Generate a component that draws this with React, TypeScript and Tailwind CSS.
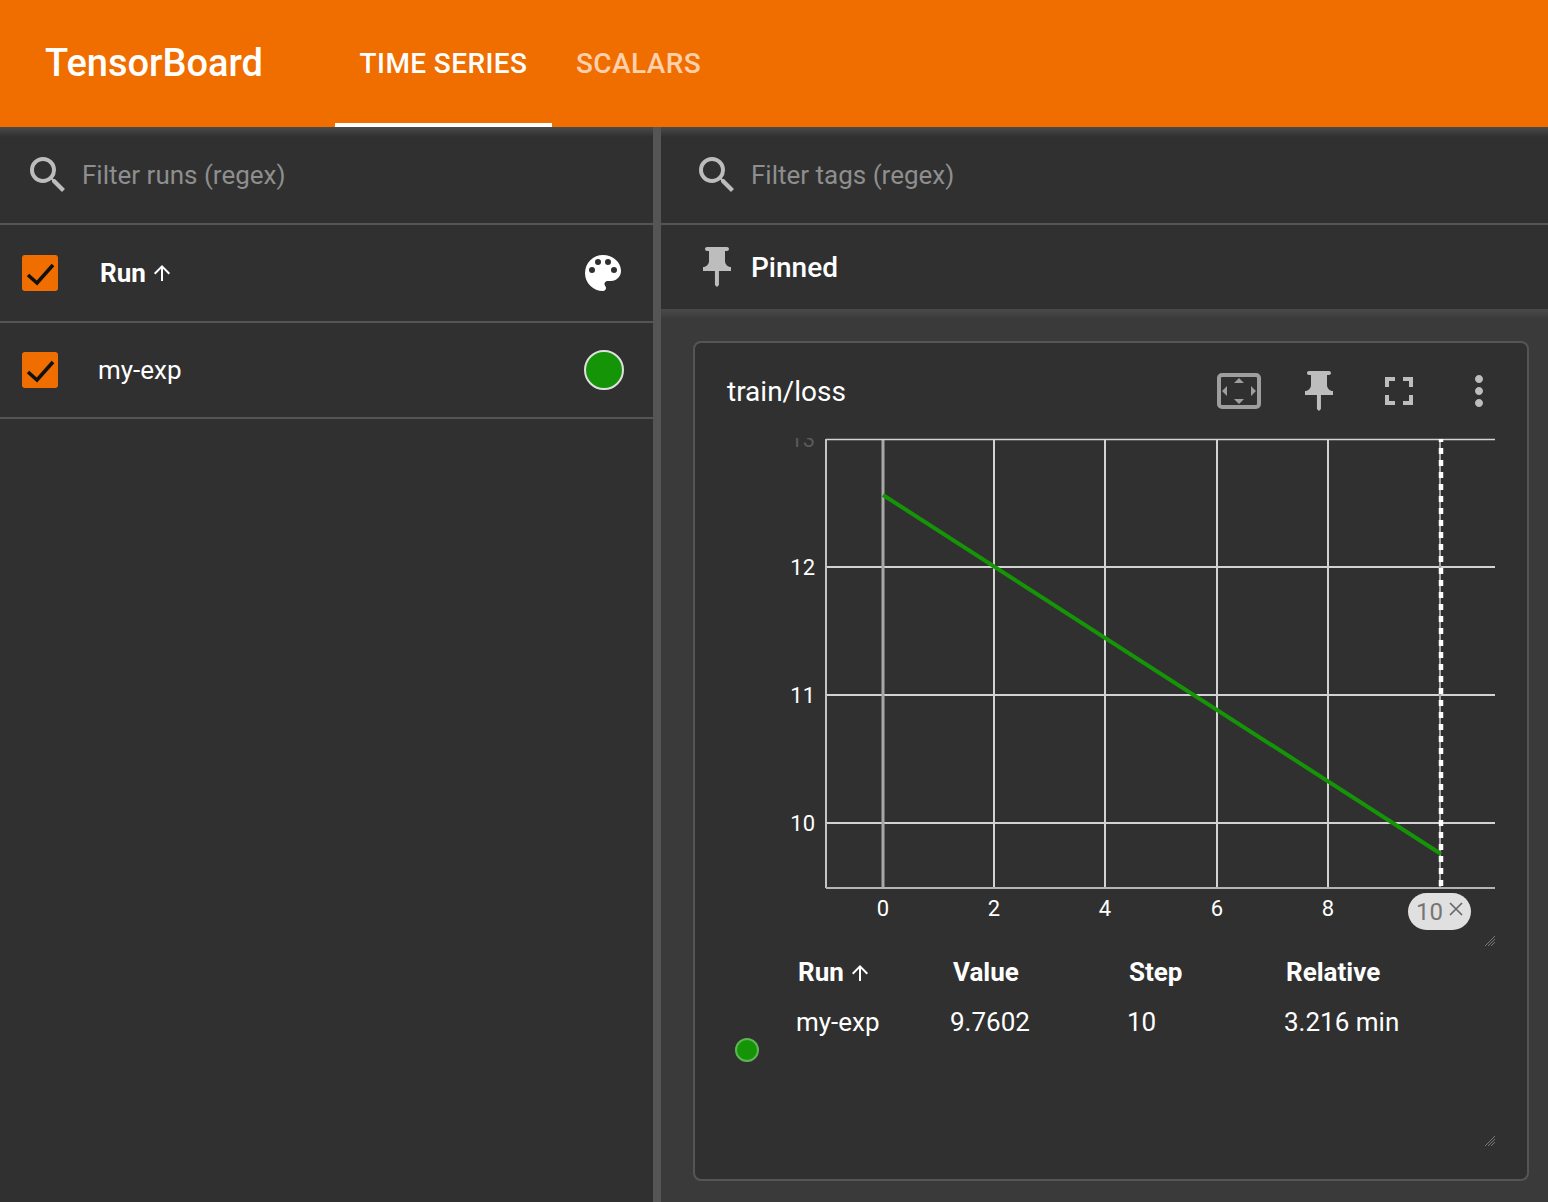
import React from "react";

const font = "font-['Roboto',sans-serif]";

const SearchIcon = () => (
  <svg width="48" height="48" viewBox="0 0 24 24" fill="#bdbdbd">
    <path d="M15.5 14h-.79l-.28-.27A6.47 6.47 0 0 0 16 9.5 6.5 6.5 0 1 0 9.5 16c1.61 0 3.09-.59 4.23-1.57l.27.28v.79l5 4.99L20.49 19l-4.99-5zm-6 0C7.01 14 5 11.99 5 9.5S7.01 5 9.5 5 14 7.01 14 9.5 11.99 14 9.5 14z" />
  </svg>
);

const PinIcon = () => (
  <svg width="48" height="48" viewBox="0 0 24 24" fill="#bdbdbd">
    <path d="M16 9V4h1c.55 0 1-.45 1-1s-.45-1-1-1H7c-.55 0-1 .45-1 1s.45 1 1 1h1v5c0 1.66-1.34 3-3 3v2h5.97v7l1 1 1-1v-7H19v-2c-1.66 0-3-1.34-3-3z" />
  </svg>
);

const CheckBox = () => (
  <div className="flex h-9 w-9 items-center justify-center rounded-[3px] bg-[#f06e00]">
    <svg width="32" height="32" viewBox="0 0 32 32" fill="none">
      <path d="M4 18 L13 26 L29 8" stroke="#111111" strokeWidth="3.6" />
    </svg>
  </div>
);

const PanelShadow = () => (
  <div className="pointer-events-none absolute inset-x-0 top-0 h-2.5 bg-gradient-to-b from-[#4a4a4a] to-transparent" />
);

const SearchRow = ({ placeholder, pad }: { placeholder: string; pad: string }) => (
  <div className={`relative flex h-[98px] items-center border-b-2 border-[#555555] ${pad}`}>
    <PanelShadow />
    <SearchIcon />
    <span className="ml-[10px] text-[26px] text-[#8e8e8e]">{placeholder}</span>
  </div>
);

const RunArrow = () => (
  <svg width="24" height="24" viewBox="0 0 24 24" fill="white" className="ml-1">
    <path d="M4 12l1.41 1.41L11 7.83V20h2V7.83l5.58 5.59L20 12l-8-8-8 8z" />
  </svg>
);

const Chart = () => {
  const xs = [883, 994, 1105, 1217, 1328];
  const ys = [567, 695, 823];
  return (
    <svg width="832" height="553" viewBox="695 395 832 553" className="block">
      {ys.map((y) => (
        <line key={y} x1="826" x2="1495" y1={y} y2={y} stroke="#d2d2d2" strokeWidth="2" />
      ))}
      {xs.map((x, i) => (
        <line key={x} x1={x} x2={x} y1="439" y2="888" stroke={i === 0 ? "#a8a8a8" : "#d2d2d2"} strokeWidth={i === 0 ? 3 : 2} />
      ))}
      <line x1="826" x2="1495" y1="439.5" y2="439.5" stroke="#d2d2d2" strokeWidth="1.5" />
      <line x1="826" x2="826" y1="439" y2="888" stroke="#c4c4c4" strokeWidth="2" />
      <line x1="1440" x2="1440" y1="439" y2="888" stroke="#a8a8a8" strokeWidth="2" />
      <line x1="1441" x2="1441" y1="439" y2="888" stroke="#ffffff" strokeWidth="4.5" strokeDasharray="6 6" strokeDashoffset="3" />
      <line x1="883" y1="495" x2="1441" y2="854" stroke="#169408" strokeWidth="4" />
      <line x1="826" x2="1495" y1="888" y2="888" stroke="#b4b4b4" strokeWidth="2" />
      <g fill="#ffffff" fontSize="22" fontFamily="Roboto, sans-serif">
        <text x="815" y="575" textAnchor="end">12</text>
        <text x="815" y="703" textAnchor="end">11</text>
        <text x="815" y="831" textAnchor="end">10</text>
        {xs.map((x, i) => (
          <text key={x} x={x} y="916" textAnchor="middle">{i * 2}</text>
        ))}
      </g>
      <clipPath id="top-tick">
        <rect x="780" y="438" width="40" height="10" />
      </clipPath>
      <text x="815" y="447" textAnchor="end" fill="#5a5a5a" fontSize="22" fontFamily="Roboto, sans-serif" clipPath="url(#top-tick)">13</text>
      <g stroke="#777777" strokeWidth="1">
        <line x1="1485" y1="946" x2="1495" y2="936" />
        <line x1="1488" y1="946" x2="1495" y2="939" />
        <line x1="1491" y1="946" x2="1495" y2="942" />
      </g>
    </svg>
  );
};

export default function App() {
  return (
    <div className={`${font} flex h-[1202px] w-[1548px] flex-col overflow-hidden bg-[#303030] text-white`}>
      <header className="flex h-[127px] shrink-0 items-center bg-[#f06e00]">
        <div className="ml-[45px] w-[290px] text-[38px] font-medium">TensorBoard</div>
        <nav className="flex h-full items-stretch">
          <div className="flex w-[217px] items-center justify-center border-y-4 border-t-transparent border-b-white text-[28px] font-medium tracking-[0.4px]">TIME SERIES</div>
          <div className="flex w-[173px] items-center justify-center border-y-4 border-transparent text-[28px] font-medium tracking-[0.4px] text-[#ffd0ac]">SCALARS</div>
        </nav>
      </header>

      <div className="flex min-h-0 flex-1">
        <aside className="w-[653px] shrink-0">
          <SearchRow placeholder="Filter runs (regex)" pad="pl-6" />
          <div className="flex h-[98px] items-center border-b-2 border-[#555555] pl-[22px] pr-[29px]">
            <CheckBox />
            <span className="ml-[42px] text-[26px] font-bold">Run</span>
            <RunArrow />
            <svg width="48" height="48" viewBox="0 0 24 24" fill="white" className="-mr-[3px] ml-auto">
              <path d="M12 3a9 9 0 0 0 0 18c.83 0 1.5-.67 1.5-1.5 0-.39-.15-.74-.39-1.01-.23-.26-.38-.61-.38-.99 0-.83.67-1.5 1.5-1.5H16c2.76 0 5-2.24 5-5 0-4.42-4.03-8-9-8zm-5.5 9a1.5 1.5 0 1 1 0-3 1.5 1.5 0 0 1 0 3zm3-4a1.5 1.5 0 1 1 0-3 1.5 1.5 0 0 1 0 3zm5 0a1.5 1.5 0 1 1 0-3 1.5 1.5 0 0 1 0 3zm3 4a1.5 1.5 0 1 1 0-3 1.5 1.5 0 0 1 0 3z" />
            </svg>
          </div>
          <div className="flex h-[96px] items-center border-b-2 border-[#555555] pl-[22px] pr-[29px]">
            <CheckBox />
            <span className="ml-10 text-[26px]">my-exp</span>
            <div className="ml-auto h-10 w-10 rounded-full border-2 border-[#e0e0e0] bg-[#169408]" />
          </div>
        </aside>

        <div className="w-2 shrink-0 bg-[#555555]" />

        <main className="flex min-w-0 flex-1 flex-col">
          <SearchRow placeholder="Filter tags (regex)" pad="pl-8" />
          <div className="flex h-[84px] shrink-0 items-center pl-8">
            <PinIcon />
            <span className="ml-[10px] pt-0.5 text-[28px] font-medium">Pinned</span>
          </div>
          <div className="relative min-h-0 flex-1 bg-[#3a3a3a] pl-8 pr-[19px] pt-8">
            <PanelShadow />
            <section className="relative h-[840px] rounded-lg border-2 border-[#555555] bg-[#303030]">
              <div className="flex h-[52px] items-center justify-between pl-8">
                <span className="mt-[46px] text-[28px]">train/loss</span>
                <div className="mt-11 flex items-center pr-6">
                  <svg width="48" height="48" viewBox="0 0 48 48" fill="#9e9e9e">
                    <rect x="4" y="8" width="40" height="32" rx="3" fill="none" stroke="#9e9e9e" strokeWidth="4" />
                    <path d="M24 11l5 5h-10zM24 37l-5-5h10zM7 24l5-5v10zM41 24l-5-5v10z" />
                  </svg>
                  <div className="ml-8"><PinIcon /></div>
                  <svg width="48" height="48" viewBox="0 0 24 24" fill="#bdbdbd" className="ml-8">
                    <path d="M7 14H5v5h5v-2H7v-3zm-2-4h2V7h3V5H5v5zm12 7h-3v2h5v-5h-2v3zM14 5v2h3v3h2V5h-5z" />
                  </svg>
                  <svg width="48" height="48" viewBox="0 0 24 24" fill="#bdbdbd" className="ml-8">
                    <path d="M12 8c1.100 0 2-.9 2-2s-.9-2-2-2-2 .9-2 2 .9 2 2 2zm0 2c-1.100 0-2 .9-2 2s.9 2 2 2 2-.9 2-2-.9-2-2-2zm0 6c-1.100 0-2 .9-2 2s.9 2 2 2 2-.9 2-2-.9-2-2-2z" />
                  </svg>
                </div>
              </div>
              <Chart />
              <div className="absolute left-[713px] top-[550px] flex h-[37px] w-[63px] items-center rounded-full bg-[#e0e0e0] pl-2 text-[24px] text-[#757575]">
                <span>10</span>
                <svg width="20" height="20" viewBox="0 0 20 20" stroke="#666666" strokeWidth="1.700" className="mb-[6px] ml-[3px]">
                  <path d="M4 4l12 12M16 4L4 16" />
                </svg>
              </div>
              <div className="ml-[38px] flex">
                <div className="w-[65px] pl-0.5 pt-[90px]">
                  <div className="h-6 w-6 rounded-full border-2 border-[#5cb552] bg-[#169408]" />
                </div>
                <div className="flex flex-col">
                  <div className="flex h-[49px] items-center text-[26px] font-bold">
                    <div className="flex w-[155px] items-center"><span>Run</span><RunArrow /></div>
                    <div className="w-[176px]">Value</div>
                    <div className="w-[157px]">Step</div>
                    <div>Relative</div>
                  </div>
                  <div className="-ml-0.5 flex h-[50px] items-center text-[26px]">
                    <div className="w-[154px]">my-exp</div>
                    <div className="w-[177px]">9.7602</div>
                    <div className="w-[157px]">10</div>
                    <div>3.216 min</div>
                  </div>
                </div>
              </div>
              <svg width="12" height="12" viewBox="0 0 12 12" stroke="#777777" className="absolute bottom-8 right-[31px]">
                <path d="M1 11L11 1M4 11l7-7M7 11l4-4" />
              </svg>
            </section>
          </div>
        </main>
      </div>
    </div>
  );
}
